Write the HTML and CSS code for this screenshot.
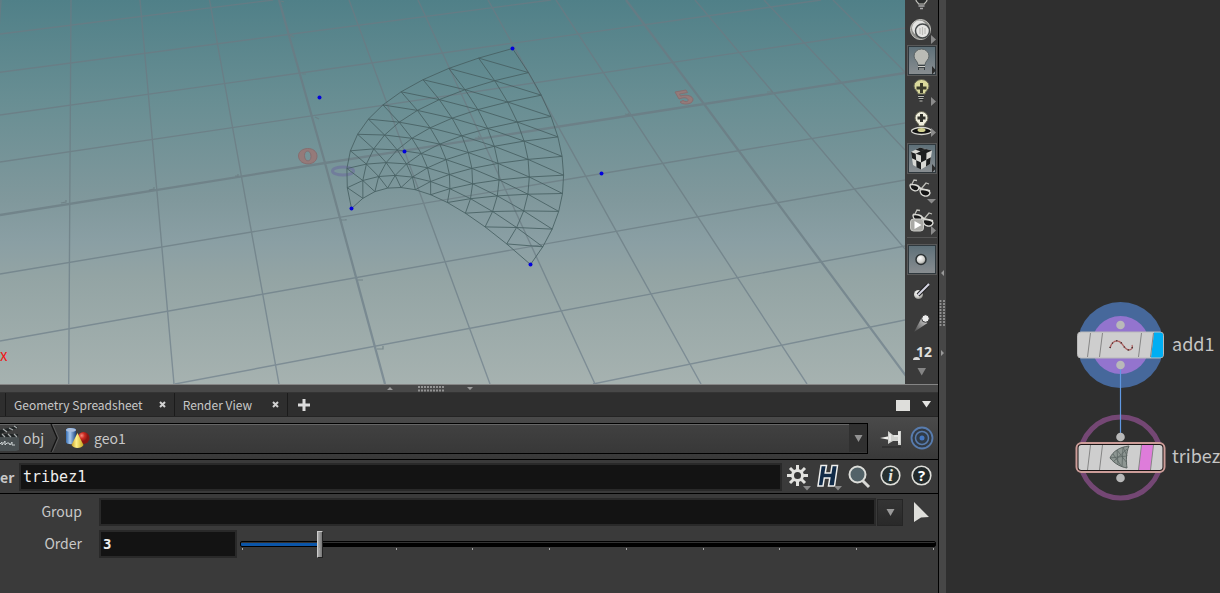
FILE: index.html
```html
<!DOCTYPE html>
<html lang="en">
<head>
<meta charset="utf-8">
<title>tribez1</title>
<link rel="stylesheet" href="styles.css">
</head>
<body>
<div class="app">
  <main class="left">
    <section class="stage">
      <svg class="viewport" viewBox="0 0 905 384" preserveAspectRatio="xMinYMin slice" role="img" aria-label="Scene view">
        <defs>
          <linearGradient id="sky" x1="0" y1="0" x2="0" y2="1">
            <stop offset="0" stop-color="#508088"/>
            <stop offset=".26" stop-color="#688e93"/>
            <stop offset=".52" stop-color="#80989c"/>
            <stop offset=".63" stop-color="#8a9fa4"/>
            <stop offset=".72" stop-color="#93a4a4"/>
            <stop offset="1" stop-color="#a6b2b0"/>
          </linearGradient>
          <linearGradient id="wire" gradientUnits="userSpaceOnUse" x1="0" y1="0" x2="0" y2="384">
            <stop offset="0" stop-color="#647b84"/>
            <stop offset=".5" stop-color="#708389"/>
            <stop offset="1" stop-color="#7f8e96"/>
          </linearGradient>
        </defs>
        <rect width="905" height="384" fill="url(#sky)"/>
        <g stroke="url(#wire)" stroke-width="1.4" fill="none">
          <path d="M1 0L-1 30M71 0L68.700 384M140 0L174 384M209.500 0L279 384M349 0L490 384M418 0L595 384M488 0L701 384M556 0L807 384M695 0L905 249M764 0L905 150M833 0L905 72"/>
          <path d="M0 34L273 0M0 72.300L551 0M0 115L821 0M0 162L905 28M0 274L905 123M0 341L905 180M175 384L905 246M593 384L905 320"/>
        </g>
        <g stroke="url(#wire)" stroke-width="2.300" fill="none">
          <path d="M279 0L325 163L385 384M626 0L704 104L912 384M0 215L325 163L704 104L905 73"/>
        </g>
        <g stroke="#6b7d82" stroke-width="1.200" fill="none" opacity=".8">
          <path d="M281 1l3 1M290 35l4 2M302 74h4M315 117l4 2M61 203l5 -1v-2M149 190l5 -1v-2M235 176l3 0v-2M341 220h5v-1M358 280h5M377 349h6v-3M475 138h5l-2 -2M625 114l4 1l-1 -2M767 92l5 0l-1 -2M835 81l5 0M902 70l3 2"/>
        </g>
        <path class="axis-x" fill-rule="evenodd" d="M298.500 156c0-9.500 18-10.500 18.500 0c0 10.500-18 10.500-18.500 0zM304.500 155.500c0 7 6.500 7 6.500 1c0-7-6.500-7-6.500-1z"/>
        <ellipse cx="343" cy="171" rx="10.500" ry="4" class="axis-z"/>
        <path class="axis-x" d="M675 92l11-2l1.500 2.500l-8 1.500l1 2c6-2 13 0 12.500 4c-1 5-11 5-13 2l3-1.500c3 2 6 1 5-1c-2-3-6-1.500-9-.5z"/>
        <g id="mesh" class="mesh"></g>
        <g class="points">
          <circle cx="512.500" cy="48.500" r="2"/><circle cx="319.500" cy="97.500" r="2"/><circle cx="404.500" cy="151.500" r="2"/>
          <circle cx="601.500" cy="173.500" r="2"/><circle cx="351.500" cy="208.500" r="2"/><circle cx="530.500" cy="264.500" r="2"/>
        </g>
        <text x="0" y="361" class="gizmo">x</text>
      </svg>

      <div class="tools" role="toolbar" aria-label="Display options">
        <svg width="0" height="0" class="defs" aria-hidden="true">
          <defs>
            <radialGradient id="pearl" cx=".4" cy=".35" r=".7"><stop offset="0" stop-color="#fff"/><stop offset=".6" stop-color="#d2d2ce"/><stop offset="1" stop-color="#84847f"/></radialGradient>
            <linearGradient id="taper" x1="1" y1="0" x2="0" y2="1"><stop offset="0" stop-color="#ddd"/><stop offset="1" stop-color="#444"/></linearGradient>
            <path id="more" d="M24 21l5 4.500l-5 4.500z" fill="#8b8b8b"/>
            <g id="bulb-base"><rect x="11" y="19" width="6" height="5" rx="1" fill="#272b2c"/><path d="M11 20.500h6M11.500 22.500h5M12.500 25h3" stroke="#b6b6b0"/></g>
            <g id="shades">
              <path d="M4 8L7 2l3 .5M14 11l5-6l3 1" stroke="#bebeb8" stroke-width="1.300" fill="none"/>
              <path d="M3 6.500l8 2l3 2.500l9 2" stroke="#dcdcd7" stroke-width="2" fill="none"/>
              <path d="M3 7c3-1 9 0 9 3c-1 5-9 3-9-3z" fill="#151515" stroke="#dcdcd7" stroke-width="1.300"/>
              <path d="M13 12c3-1 10 0 10 3c-1 5-10 4-10-3z" fill="#151515" stroke="#dcdcd7" stroke-width="1.300"/>
            </g>
          </defs>
        </svg>
        <button class="tool tool-cut" type="button" aria-label="No lighting"><svg viewBox="0 0 30 14"><path d="M9 0c0 2 2 2 2.500 4h6c.5-2 2.500-2 2.500-4" fill="#292b2b" stroke="#c5c5bf" stroke-width="1.200"/><path d="M11.500 6h6M13 8.500h3" stroke="#aaa" stroke-width="1.500"/></svg></button>
        <button class="tool" type="button" aria-label="Headlight"><svg viewBox="0 0 30 31"><circle cx="13.500" cy="15.500" r="10" fill="#8c8c88" stroke="#c9c9c4"/><circle cx="12.500" cy="14" r="7.500" fill="#e4e4e2"/><circle cx="15.500" cy="17" r="7" fill="#e4e4e2" stroke="#45494a" stroke-width="1.500"/><path d="M13 14v6M15.500 13v8M18 14v6" stroke="#bcbcb8" stroke-width="1.200"/><use href="#more"/></svg></button>
        <button class="tool tool-on" type="button" aria-label="Normal lighting" aria-pressed="true"><svg viewBox="0 0 30 31"><path d="M11 20c0-4-4-5-4-9a7.500 7 0 0 1 15 0c0 4-4 5-4 9z" fill="#babbb5" stroke="#5b6365"/><rect x="11" y="20" width="7" height="5" fill="#3a4144"/><path d="M11 21.500h7M12 24h5" stroke="#d0d0ca"/><path d="M25 21l4 4.500l-4 4z" fill="#2a2a2a"/></svg></button>
        <button class="tool" type="button" aria-label="High quality lighting"><svg viewBox="0 0 30 31"><path d="M11 18c0-3-4-4-4-8a7.500 6.500 0 0 1 15 0c0 4-4 5-4 8z" fill="#dad99c" stroke="#686855"/><path d="M14.500 7v10M9.500 12h10" stroke="#393a2b" stroke-width="3"/><use href="#bulb-base"/><use href="#more"/></svg></button>
        <button class="tool" type="button" aria-label="High quality lighting with shadows"><svg viewBox="0 0 30 31"><ellipse cx="14.500" cy="24" rx="10" ry="3.500" fill="#111" stroke="#d7d7d0" stroke-width="1.300"/><path d="M12 19c0-3-4-4-4-8a6.500 6.500 0 0 1 13 0c0 4-4 5-4 8z" fill="#efeedd" stroke="#686855"/><path d="M14.500 7v8M10.500 11h8" stroke="#30312b" stroke-width="3"/><ellipse cx="14.500" cy="23" rx="4" ry="2" fill="#d2d18e"/><use href="#more"/></svg></button>
        <button class="tool tool-on tool-gap" type="button" aria-label="Textures" aria-pressed="true"><svg viewBox="0 0 30 31"><path d="M4 9L13 4.500L25 7.500L23 21L14 26.500L6 22z" fill="#d8d8d4"/><path d="M8.500 6.800L13 4.500l5.500 1.400l-5 2.300zM13.500 8.200l5.500-2.300L25 7.500l-5.500 2.500zM13.500 8.200l6 1.800l-5.500 2.600l-5.300-1.800zM4 9l4.700 1.800l.5 6.500L5 15.200zM9.200 17.300L14 19.500v7l-4.500-2.300zM14 12.600l5.500-2.600l-.2 6.700L14 19.500zM19.300 16.700l4.600-2.400L23 21l-4 2.500z" fill="#1c1e1f"/><path d="M25 21l4 4.500l-4 4z" fill="#2a2a2a"/></svg></button>
        <button class="tool" type="button" aria-label="Object visibility"><svg viewBox="0 0 30 31"><use href="#shades" y="4"/><path d="M20 25h9l-4.500 4.500z" fill="#8b8b8b"/></svg></button>
        <button class="tool" type="button" aria-label="Render visibility"><svg viewBox="0 0 30 31"><use href="#shades" x="3" y="3"/><rect x="3.500" y="14" width="13" height="12" rx="3" fill="#a9a9a5" stroke="#c9c9c5"/><path d="M7.500 16l7 4l-7 4z" fill="#fff"/><use href="#more"/></svg></button>
        <hr class="tool-rule">
        <button class="tool tool-on" type="button" aria-label="Display points" aria-pressed="true"><svg viewBox="0 0 30 31"><circle cx="14" cy="15.500" r="5" fill="url(#pearl)" stroke="#2d3335" stroke-width="1.500"/></svg></button>
        <button class="tool" type="button" aria-label="Point normals"><svg viewBox="0 0 30 31"><circle cx="11.500" cy="19.500" r="4.500" fill="url(#pearl)"/><path d="M11 20L21 10" stroke="#222" stroke-width="4"/><path d="M11 20L22 9" stroke="#d5d5e2" stroke-width="2"/></svg></button>
        <button class="tool" type="button" aria-label="Point trails"><svg viewBox="0 0 30 31"><path d="M7 26L14.500 12l6 5z" fill="url(#taper)"/><circle cx="18.500" cy="12.500" r="3.800" fill="#eee" stroke="#333"/></svg></button>
        <button class="tool" type="button" aria-label="Point numbers"><svg viewBox="0 0 30 31"><text x="9" y="20" class="tool-number">12</text><path d="M6 23a3.500 3 0 0 1 7 0z" fill="#ddd"/></svg></button>
        <button class="tool-down" type="button" aria-label="More options"><svg viewBox="0 0 30 8"><path d="M10.500 0h8.500l-4.300 7.500z" fill="#858585"/></svg></button>
      </div>
    </section>

    <div class="splitter-h"><svg viewBox="0 0 90 7" aria-hidden="true"><path d="M1 5l3-3l3 3zM81 2h6l-3 3z" fill="#999"/><path d="M32 2h27M32 5.500h27" stroke="#929292" stroke-width="1.800" stroke-dasharray="2 1"/></svg></div>

    <nav class="tabs" aria-label="Panes">
      <div class="tab"><span>Geometry Spreadsheet</span><button type="button" class="close" aria-label="Close Geometry Spreadsheet"><svg viewBox="0 0 7 7"><path d="M1 1l5 5M6 1l-5 5" stroke="#d2d2d2" stroke-width="2"/></svg></button></div>
      <div class="tab"><span>Render View</span><button type="button" class="close" aria-label="Close Render View"><svg viewBox="0 0 7 7"><path d="M1 1l5 5M6 1l-5 5" stroke="#d2d2d2" stroke-width="2"/></svg></button></div>
      <button type="button" class="add-tab" aria-label="New tab"><svg viewBox="0 0 12 12"><path d="M6 0v12M0 6h12" stroke="#dcdcdc" stroke-width="3"/></svg></button>
      <button type="button" class="maximise" aria-label="Maximise pane"></button>
      <button type="button" class="pane-menu" aria-label="Pane menu"><svg viewBox="0 0 9 7"><path d="M0 0h9l-4.500 6.500z" fill="#e4e4e2"/></svg></button>
    </nav>

    <div class="path-row">
      <div class="path-box">
        <button type="button" class="crumb"><svg width="19" height="26" viewBox="0 0 19 26" aria-hidden="true"><path d="M0 12h18l1 1v12l-3 1H0z" fill="#495052"/><path d="M0 12h18v-3H0z" fill="#202425"/><path d="M0 5l17-4l1 2L0 9z" fill="#202425"/><path d="M3 4l4 3M9 3l4 2M14 1l3 2M2 9l3 3M8 9l3 3M14 9l3 3" stroke="#a5aaaa" stroke-width="1.300"/><path d="M0 19l2-2v3l3-4v4l2-2h2l1 2l2-3v3h3" stroke="#cad0d1" fill="none"/></svg><span>obj</span></button>
        <svg class="chevron" viewBox="0 0 10 28" aria-hidden="true"><path d="M1 0l6 14L1 28" fill="none" stroke="#141414" stroke-width="1.300"/><path d="M2.500 0l6 14l-6 14" fill="none" stroke="#5a5a5a"/></svg>
        <button type="button" class="crumb"><svg width="24" height="20" viewBox="0 0 24 20" aria-hidden="true"><defs><linearGradient id="cyl"><stop offset="0" stop-color="#376db2"/><stop offset=".4" stop-color="#a6c9ef"/><stop offset="1" stop-color="#1f477f"/></linearGradient><radialGradient id="ball" cx=".35" cy=".3"><stop offset="0" stop-color="#f58c7f"/><stop offset=".5" stop-color="#cc2b21"/><stop offset="1" stop-color="#871613"/></radialGradient><linearGradient id="cone"><stop offset="0" stop-color="#c79e23"/><stop offset=".4" stop-color="#fff18a"/><stop offset="1" stop-color="#c5a41c"/></linearGradient></defs><path d="M0 2c0-3 10-3 10 0v12c0 3-10 3-10 0z" fill="url(#cyl)"/><ellipse cx="5" cy="2" rx="5" ry="1.800" fill="#a8bddd"/><circle cx="17.500" cy="10" r="6" fill="url(#ball)"/><path d="M11.500 5l6 12c-2 4-10 4-12 0z" fill="url(#cone)"/></svg><span>geo1</span></button>
        <button type="button" class="path-drop" aria-label="Path history"><svg viewBox="0 0 9 7"><path d="M.5 0h8l-4 7z" fill="#929292"/></svg></button>
      </div>
      <button type="button" class="icon-btn pin" aria-label="Pin"><svg width="26" height="22" viewBox="0 0 26 22"><path d="M3 20h19" stroke="#313131" stroke-width="2"/><path d="M1 11l10-2v4z" fill="#f2f2ef"/><path d="M9 4l5 4h5V4h3v14h-3v-4h-5l-5 3z" fill="#cfd0cd"/><path d="M15 9h4M11 7v7M20 5v11" stroke="#f8f8f7" stroke-width="1.200"/></svg></button>
      <button type="button" class="icon-btn" aria-label="Link pane"><svg width="24" height="24" viewBox="0 0 24 24"><circle cx="12" cy="12" r="10.500" fill="#333a43" stroke="#587cae" stroke-width="1.800"/><circle cx="12" cy="12" r="6.500" fill="#303b47" stroke="#587cae" stroke-width="1.500"/><circle cx="12" cy="12" r="2.500" fill="#4477c1"/></svg></button>
    </div>

    <div class="name-row">
      <label for="node-name">er</label>
      <input id="node-name" type="text" value="tribez1" spellcheck="false">
      <div class="actions">
        <button type="button" class="icon-btn" aria-label="Gear menu"><svg width="26" height="28" viewBox="0 0 26 28"><g stroke="#e1e1de" stroke-width="3"><path d="M12.500 2v21M2 12.500h21M5 5l15 15M20 5L5 20"/></g><circle cx="12.500" cy="12.500" r="6.500" fill="#e1e1de"/><circle cx="12.500" cy="12.500" r="3.500" fill="#353535"/><path d="M18 23h8l-4 4.500z" fill="#898989"/></svg></button>
        <button type="button" class="icon-btn" aria-label="Houdini menu"><svg width="26" height="28" viewBox="0 0 26 28"><path d="M5 2.500h5.500l-1.300 7.500h5.600l1.200-7.500h5.500l-3 20.500h-6l1.300-8H8.300L7 23H2z" fill="#112b48" stroke="#f0f0ee" stroke-width="1.500"/><path d="M18 23h8l-4 4.500z" fill="#898989"/></svg></button>
        <button type="button" class="icon-btn" aria-label="Search"><svg width="26" height="28" viewBox="0 0 26 28"><path d="M15 17l7 7" stroke="#d9d9d6" stroke-width="3"/><circle cx="10.500" cy="11.500" r="8" fill="#526268" stroke="#dddeda" stroke-width="2"/></svg></button>
        <button type="button" class="icon-btn" aria-label="Info"><svg width="26" height="28" viewBox="0 0 26 28"><circle cx="12.500" cy="12.500" r="9.300" fill="#26302f" stroke="#deded9" stroke-width="1.600"/><text x="12.500" y="18" class="info-glyph">i</text></svg></button>
        <button type="button" class="icon-btn" aria-label="Help"><svg width="26" height="28" viewBox="0 0 26 28"><circle cx="12.500" cy="12.500" r="9.300" fill="#22292a" stroke="#deded9" stroke-width="1.600"/><text x="12.500" y="18" class="help-glyph">?</text></svg></button>
      </div>
    </div>

    <form class="params">
      <div class="param">
        <label for="group">Group</label>
        <input id="group" type="text" class="group-field">
        <button type="button" class="group-drop" aria-label="Group list"><svg viewBox="0 0 9 7"><path d="M.5 0h8l-4 7z" fill="#999"/></svg></button>
        <button type="button" class="icon-btn" aria-label="Select geometry"><svg width="18" height="24" viewBox="0 0 18 24"><path d="M1 2l15 15l-8 .5L1 22z" fill="#dfdfdb"/></svg></button>
      </div>
      <div class="param">
        <label for="order">Order</label>
        <input id="order" type="text" class="order-field" value="3">
        <div class="slider">
          <input type="range" min="2" max="11" value="3" aria-label="Order">
          <div class="ticks" aria-hidden="true"><i></i><i></i><i></i><i></i><i></i><i></i><i></i><i></i><i></i><i></i></div>
        </div>
      </div>
    </form>
  </main>

  <div class="splitter-v"><svg viewBox="0 0 7 90" aria-hidden="true"><path d="M5 2l-3 3l3 3zM2 82l3 3l-3 3z" fill="#999"/><path d="M1.500 32v27M5 32v27" stroke="#929292" stroke-width="1.800" stroke-dasharray="2 1"/></svg></div>

  <aside class="network">
    <svg class="graph" role="img" aria-label="Network: add1 feeds tribez1">
      <circle cx="174.500" cy="345" r="43" fill="#46689b"/>
      <circle cx="174.500" cy="345" r="29" fill="#9374ce"/>
      <circle cx="174.500" cy="457.500" r="40.500" fill="none" stroke="#744774" stroke-width="5"/>
      <path d="M174.500 368V434" stroke="#6098e2" stroke-width="1.200"/>
      <g fill="#b9b9b9"><circle cx="174.500" cy="325" r="4.300"/><circle cx="174.500" cy="365" r="4.300"/><circle cx="174.500" cy="437" r="4.300"/><circle cx="174.500" cy="478" r="4.300"/></g>
      <rect x="131.500" y="332" width="86" height="26" rx="3.500" fill="#cecece" stroke="#b9b9b9"/>
      <path d="M208 332.500h6.500q2.500 0 2.500 2.500v20q0 2.500-2.500 2.500h-9.500z" fill="#00aef3"/>
      <path d="M144.500 333l-3 24M156.500 333l-3 24M195.500 333l-3 24M207.500 333l-3 24" stroke="#858585"/>
      <path d="M164 348c1-4 4-8 8-7c5 1 6 9 11 9c3 0 4-3 3-5" stroke="#ad6262" stroke-width="1.300" fill="none"/>
      <path d="M164 348c1-4 4-8 8-7c5 1 6 9 11 9c3 0 4-3 3-5" stroke="#382828" stroke-width="1.500" stroke-dasharray="1 4" fill="none"/>
      <rect x="130.500" y="443" width="88" height="29" rx="5" fill="#1b1515" stroke="#cc9d99" stroke-width="2"/>
      <rect x="132.500" y="445" width="84" height="25" rx="3" fill="#cecece"/>
      <path d="M195.500 445h12l-3 25h-12z" fill="#de7cda"/>
      <path d="M144.500 445l-3 25M156.500 445l-3 25M195.500 445l-3 25M207.500 445l-3 25" stroke="#858585"/>
      <path d="M183 446c-9 1-16 5-19 12c5 6 11 9 17 10c-1-7-1-15 2-22z" fill="#8d9692" stroke="#59625f"/>
      <path d="M171 450l1 14M177 447l-1 20M164 458l17-2M167 454l9 13M171 450l10 13M177 447l4 9M167 462l14-13" stroke="#5d6764" stroke-width=".8" fill="none"/>
      <text x="226" y="351" class="node-name">add1</text>
      <text x="226" y="463" class="node-name">tribez1</text>
    </svg>
  </aside>
</div>
<script src="mesh.js"></script>
</body>
</html>
```

FILE: styles.css
```css
* { box-sizing: border-box; }

body {
  margin: 0;
  background: #3a3a3a;
  color: #c8c8c8;
  font: 14px/20px "Noto Sans CJK SC", "Open Sans", sans-serif;
}

button {
  margin: 0;
  padding: 0;
  border: 0;
  background: none;
  color: inherit;
  font: inherit;
}

svg { display: block; }

.app {
  display: grid;
  grid-template-columns: minmax(0, 938fr) 8px minmax(0, 274fr);
  min-height: 100vh;
}

.left {
  display: flex;
  flex-direction: column;
  min-width: 0;
}

/* Scene view */
.stage {
  display: flex;
  flex: 1;
  min-height: 376px;
}
.viewport {
  flex: 1;
  width: 0;
  height: auto;
}
.mesh {
  fill: none;
  stroke: #465f62;
  stroke-width: 1;
  stroke-opacity: .85;
}
.points { fill: #0202dc; }
.axis-x {
  fill: #957a79;
  stroke: #866e70;
  stroke-width: 1;
}
.axis-z {
  fill: none;
  stroke: #717d9b;
  stroke-width: 3;
}
.gizmo {
  fill: #f01616;
  font: 15px "Noto Sans CJK SC", "Open Sans", sans-serif;
}

.tools {
  display: flex;
  flex-direction: column;
  flex: none;
  width: 33px;
  padding: 0 1px 0 2px;
  background: #3a3a3a;
}
.defs { position: absolute; }
.tool { height: 31px; }
.tool-cut { height: 14px; }
.tool-gap { margin-top: 5px; }
.tool-on {
  background: linear-gradient(#5b6e77, #8b8f92);
  box-shadow: inset 0 0 0 1px #595959, inset 0 0 0 2px #2f383d;
}
.tool-rule {
  width: 100%;
  margin: 1px 0 6px;
  border: 0;
  border-top: 1px solid #555;
}
.tool-number {
  fill: #e0e0de;
  font: bold 14px "Open Sans", sans-serif;
}
.tool-down { height: 8px; }

.splitter-h {
  height: 9px;
  padding-right: 76px;
  border-top: 1px solid #858585;
  border-bottom: 1px solid #343434;
  background: #484848;
}
.splitter-h svg {
  width: 90px;
  height: 7px;
  margin: 0 auto;
}

/* Pane tabs */
.tabs {
  display: flex;
  align-items: stretch;
  height: 24px;
  padding-left: 5px;
  border-bottom: 1px solid #242424;
  background: #2e2e2e;
}
.tab {
  display: flex;
  align-items: center;
  padding-left: 8px;
  border-left: 1px solid #1b1b1b;
  font-size: 12px;
}
.close {
  width: 7px;
  height: 7px;
  margin: 0 8px 0 16px;
}
.tab:nth-child(2) .close { margin-left: 20px; }
.add-tab {
  width: 34px;
  padding-left: 10px;
  border-left: 1px solid #1b1b1b;
}
.add-tab svg { width: 12px; }
.maximise {
  width: 14px;
  height: 11px;
  margin: 7px 0 0 auto;
  background: #dededb;
}
.pane-menu {
  width: 9px;
  margin: 0 7px 0 12px;
}

/* Network path */
.path-row {
  display: flex;
  align-items: center;
  height: 43px;
  padding-right: 4px;
  border-bottom: 1px solid #000;
  background: linear-gradient(#4a4a4a, #393939);
}
.path-box {
  display: flex;
  flex: 1;
  align-items: center;
  height: 31px;
  border: 1px solid #000;
  border-left: 0;
  background: linear-gradient(#414141, #383838);
  box-shadow: inset 0 1px #666;
}
.crumb {
  display: flex;
  align-items: center;
  gap: 4px;
}
.chevron {
  width: 10px;
  height: 28px;
  margin: 0 6px;
}
.path-drop {
  display: grid;
  place-items: center;
  width: 18px;
  height: 28px;
  margin-left: auto;
  background: #303030;
}
.path-drop svg,
.group-drop svg { width: 9px; }
.icon-btn { flex: none; }
.pin { margin: 0 5px 0 11px; }

/* Node name */
.name-row {
  display: flex;
  align-items: center;
  height: 34px;
  padding-right: 3px;
  border-bottom: 1px solid #000;
}
.name-row label {
  width: 19px;
  font-weight: bold;
}
input[type="text"] {
  min-width: 0;
  margin: 0;
  border: 2px solid #292929;
  outline: 0;
  background: #131313;
  color: #eee;
}
#node-name {
  flex: 1;
  height: 28px;
  padding: 0 2px;
  font: 15px/20px "DejaVu Sans Mono", monospace;
}
.actions {
  display: flex;
  gap: 5px;
  padding-left: 3px;
}
.info-glyph {
  fill: #e5e5df;
  font: italic bold 17px "Liberation Serif", serif;
  text-anchor: middle;
}
.help-glyph {
  fill: #fff;
  font: bold 15px "Open Sans", sans-serif;
  text-anchor: middle;
}

/* Parameters */
.params {
  display: flex;
  flex-direction: column;
  gap: 4px;
  padding: 4px 2px 35px 0;
}
.param {
  display: flex;
  align-items: center;
  height: 28px;
}
.param label {
  width: 82px;
  margin-right: 17px;
  padding-bottom: 2px;
  text-align: right;
}
.group-field {
  flex: 1;
  height: 28px;
}
.group-drop {
  display: grid;
  place-items: center;
  width: 26px;
  height: 27px;
  margin: 0 10px 0 1px;
  border: 1px solid #252525;
  background: linear-gradient(#343434, #292929);
}
.params .icon-btn { margin-right: 5px; }
.order-field {
  width: 138px;
  height: 28px;
  padding: 0 2px;
  font: bold 14px/20px "DejaVu Sans Mono", monospace;
}
.slider {
  display: grid;
  flex: 1;
  margin-left: 3px;
}
.slider > * { grid-area: 1 / 1; }
.slider input {
  width: 100%;
  height: 28px;
  margin: 0;
  appearance: none;
  background: none;
}
.slider input::-webkit-slider-runnable-track {
  height: 6px;
  border: 1px solid #000;
  border-radius: 2px;
  background: linear-gradient(#333 1px, transparent 1px), linear-gradient(90deg, #0b55a8 11%, #000 11%);
}
.slider input::-webkit-slider-thumb {
  width: 6px;
  height: 27px;
  margin-top: -11px;
  border: 1px solid #222;
  border-left-color: #ccc;
  border-top-color: #ccc;
  appearance: none;
  background: linear-gradient(90deg, #aaa, #777);
}
.ticks {
  display: flex;
  justify-content: space-between;
  padding: 18px 2px 0;
  pointer-events: none;
}
.ticks i {
  width: 1px;
  height: 2px;
  background: #a5a5a5;
}

/* Network pane */
.splitter-v {
  border-left: 1px solid #000;
  background: #474747;
}
.splitter-v svg {
  width: 7px;
  margin-top: 268px;
}
.network {
  overflow: hidden;
  background: #2f2f2f;
}
.graph {
  width: 100%;
  height: 100%;
}
.node-name {
  fill: #c5c5c5;
  font: 18px "Noto Sans CJK SC", "Open Sans", sans-serif;
}
```

FILE: mesh.js
```js
// Wireframe of a quadratic triangular Bezier patch.
// Control points are [x, y, weight].
const A = [351.5, 208.5, 1];
const B = [512.5, 48.5, 1.04];
const C = [530.5, 264.5, 1.06];
const AB = [319.5, 97.5, 1.07];
const AC = [404.5, 151.5, 1.16];
const BC = [601.5, 173.5, 1.14];
const STEPS = 11;

function patchPoint(i, j) {
  const b = i / STEPS;
  const c = j / STEPS;
  const a = 1 - b - c;
  const terms = [
    [A, a * a], [B, b * b], [C, c * c],
    [AB, 2 * a * b], [AC, 2 * a * c], [BC, 2 * b * c]
  ];
  let x = 0, y = 0, w = 0;
  for (const [p, k] of terms) {
    x += p[0] * p[2] * k;
    y += p[1] * p[2] * k;
    w += p[2] * k;
  }
  return (x / w).toFixed(1) + " " + (y / w).toFixed(1);
}

let d = "";
for (let i = 0; i < STEPS; i++) {
  for (let j = 0; i + j < STEPS; j++) {
    d += `M${patchPoint(i, j)}L${patchPoint(i + 1, j)}L${patchPoint(i, j + 1)}Z`;
  }
}
const path = document.createElementNS("http://www.w3.org/2000/svg", "path");
path.setAttribute("d", d);
document.getElementById("mesh").append(path);
```
